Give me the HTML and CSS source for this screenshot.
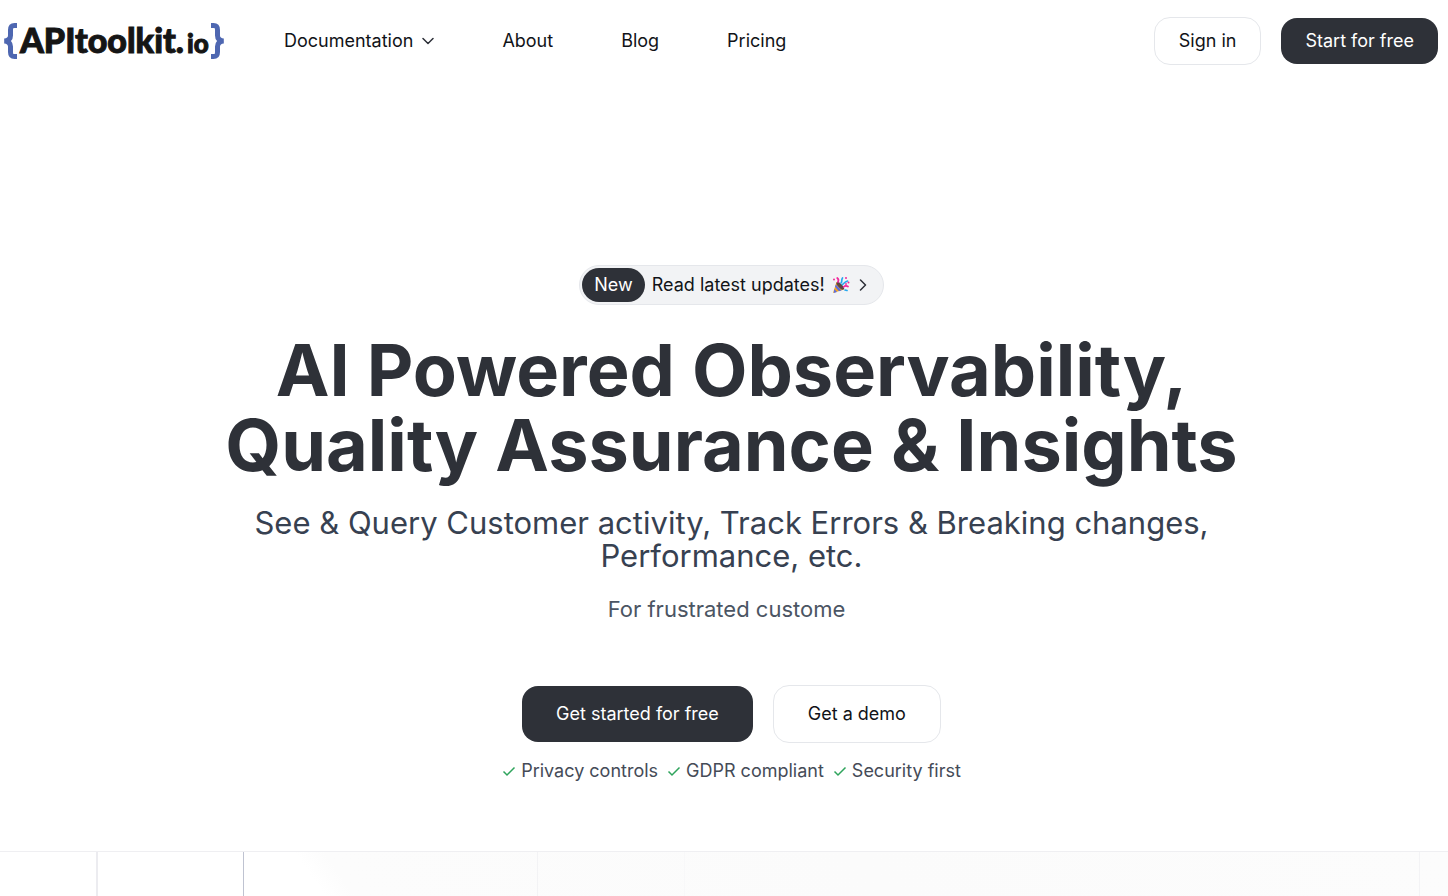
FILE: index.html
```
<!DOCTYPE html>
<html lang="en">
<head>
<meta charset="utf-8">
<meta name="viewport" content="width=device-width, initial-scale=1">
<title>APItoolkit.io</title>
<link rel="stylesheet" href="styles.css">
</head>
<body>
<header class="site-header">
  <a class="logo" href="#" aria-label="APItoolkit.io">
    <svg class="brace" viewBox="0 0 14 36" aria-hidden="true"><path d="M13 2.500h-2.500c-3 0-4 1.500-4 4.500v5.500c0 3-2 5-6 5.500c4 .5 6 2.500 6 5.500v5.500c0 3 1 4.500 4 4.500h2.500"/></svg>
    <span class="logo-name">APItoolkit.</span><span class="logo-tld">io</span>
    <svg class="brace brace-right" viewBox="0 0 14 36" aria-hidden="true"><path d="M13 2.500h-2.500c-3 0-4 1.500-4 4.500v5.500c0 3-2 5-6 5.500c4 .5 6 2.500 6 5.500v5.500c0 3 1 4.500 4 4.500h2.500"/></svg>
  </a>
  <nav class="nav">
    <button class="nav-link nav-menu" type="button">Documentation
      <svg class="chevron" viewBox="0 0 12 12" aria-hidden="true"><path d="M1 3.500l5 5 5-5"/></svg>
    </button>
    <a class="nav-link" href="#">About</a>
    <a class="nav-link" href="#">Blog</a>
    <a class="nav-link" href="#">Pricing</a>
  </nav>
  <div class="actions">
    <a class="button button-light" href="#">Sign in</a>
    <a class="button button-dark" href="#">Start for free</a>
  </div>
</header>
<main>
  <section class="hero">
    <a class="updates" href="#">
      <span class="updates-tag">New</span>
      <span>Read latest updates!</span>
      <svg class="party" viewBox="0 0 18 18" aria-hidden="true">
        <path fill="#f5a623" d="M4.500 6L12 13.500 1 17z"/>
        <path fill="#5b6ee0" d="M3.800 8.500l5.700 6-2.500.8-4-4.500zM2.200 13l2.800 3-3.200 1z"/>
        <ellipse cx="8.300" cy="9.800" rx="2" ry="5" transform="rotate(-45 8.300 9.800)" fill="#5c4545"/>
        <g fill="none" stroke-width="1.700" stroke-linecap="round">
          <path stroke="#f0289b" d="M6 6c.8-1.500.5-3-.8-4M11.500 11c1.500-1.500 3-1.500 4.500-.5"/>
          <path stroke="#25a7ee" d="M9 7c1.500-1.500 0-3 1.500-5M10.500 8.500c2.500-2.500 3-3 5-3.500M13 14l2 .5"/>
        </g>
        <g fill="#f0289b"><circle cx="14" cy="2" r="1"/><circle cx="16.500" cy="6.500" r="1"/><circle cx="2" cy="3.500" r="1"/><circle cx="14" cy="8" r=".9"/></g>
      </svg>
      <svg class="chevron" viewBox="0 0 12 12" aria-hidden="true"><path d="M3.500 1l5 5-5 5"/></svg>
    </a>
    <h1 class="title">AI Powered Observability, Quality Assurance &amp; Insights</h1>
    <p class="subtitle">See &amp; Query Customer activity, Track Errors &amp; Breaking changes, Performance, etc.</p>
    <p class="audience">For frustrated custome</p>
    <div class="cta">
      <a class="button button-dark button-large" href="#">Get started for free</a>
      <a class="button button-light button-large" href="#">Get a demo</a>
    </div>
    <ul class="benefits">
      <li><svg class="check" viewBox="0 0 14 14" aria-hidden="true"><path d="M1.500 7.500l3.500 3.500 7.500-7.500"/></svg>Privacy controls</li>
      <li><svg class="check" viewBox="0 0 14 14" aria-hidden="true"><path d="M1.500 7.500l3.500 3.500 7.500-7.500"/></svg>GDPR compliant</li>
      <li><svg class="check" viewBox="0 0 14 14" aria-hidden="true"><path d="M1.500 7.500l3.500 3.500 7.500-7.500"/></svg>Security first</li>
    </ul>
  </section>
  <section class="grid-band">
    <span class="cell cell-edge"></span>
    <span class="cell cell-strong"></span>
    <span class="cell"></span>
    <span class="cell cell-faint"></span>
    <span class="cell"></span>
  </section>
</main>
</body>
</html>
```

FILE: styles.css
```
* { box-sizing: border-box; }
body {
  margin: 0;
  min-height: 100vh;
  display: flex;
  flex-direction: column;
  overflow: hidden;
  background: #fff;
  color: #111318;
  font: 18px/28px Inter, "Liberation Sans", sans-serif;
}
a { color: inherit; text-decoration: none; }
main { flex: 1; display: flex; flex-direction: column; }

.site-header { display: flex; align-items: center; padding: 17px 10px 16px 4px; }
.logo { display: flex; align-items: baseline; width: 220px; color: #151515; line-height: 36px; font-family: Lato, sans-serif; font-weight: 900; -webkit-text-stroke: 1px #151515; }
.logo-name { margin-left: 2px; font-size: 34px; }
.logo-tld { margin-left: 3px; font-size: 26px; }
.brace { flex: none; align-self: center; width: 14px; height: 36px; fill: none; stroke: #4e67b1; stroke-width: 5; }
.brace-right { transform: scaleX(-1); margin-left: auto; }

.nav { display: flex; gap: 68px; margin-left: 60px; }
.nav-link { padding: 0; border: 0; background: none; color: inherit; font: inherit; }
.nav-menu { display: flex; align-items: center; gap: 9px; }
.chevron { width: 12px; height: 12px; fill: none; stroke: #2d3038; stroke-width: 1.5; stroke-linecap: round; stroke-linejoin: round; }

.actions { display: flex; align-items: center; gap: 20px; margin-left: auto; }
.button { padding: 9px 24px; border-radius: 16px; white-space: nowrap; }
.button-light { border: 1px solid #e5e7eb; }
.button-dark { background: #2e3138; color: #fff; }
.button-large { padding: 14px 34px; }

.hero { display: flex; flex-direction: column; align-items: center; padding: 184px 0 66px 15px; text-align: center; }
.updates { display: flex; align-items: center; gap: 7px; padding: 2px 14px 2px 2px; border: 1px solid #e5e7eb; border-radius: 21px; background: #f2f3f5; }
.updates-tag { padding: 3px 12px; border-radius: 17px; background: #2e3138; color: #fff; }
.party { width: 18px; height: 18px; }
.title { max-width: 1100px; margin: 27px 0 0; color: #2e3138; font-size: 72px; line-height: 75px; font-weight: 700; }
.subtitle { max-width: 1000px; margin: 24px 0 0; color: #374151; font-size: 31px; line-height: 33px; }
.audience { margin: 19px 0 0; padding-right: 10px; color: #4b5563; font-size: 22px; line-height: 36px; }
.cta { display: flex; align-items: center; gap: 20px; margin-top: 58px; }
.benefits { display: flex; gap: 9px; margin: 14px 0 0; padding: 0; list-style: none; color: #454b57; }
.benefits li { display: flex; align-items: center; gap: 5px; }
.check { width: 14px; height: 14px; fill: none; stroke: #2fa45c; stroke-width: 1.5; }

.grid-band {
  flex: 1;
  display: grid;
  grid-template-columns: 98fr 146fr 294fr 147fr 735fr 28fr;
  min-height: 45px;
  border-top: 1px solid #efeff2;
  background: linear-gradient(55deg, #fff 22%, #fcfcfc 24%, #fbfbfb 60%, #fcfcfc);
}
.cell { border-right: 1px solid #f3f3f5; }
.cell-edge { border-right: 2px solid #ececf0; }
.cell-strong { border-color: #bfc3d1; }
.cell-faint { border-color: #f8f8f9; }
```
